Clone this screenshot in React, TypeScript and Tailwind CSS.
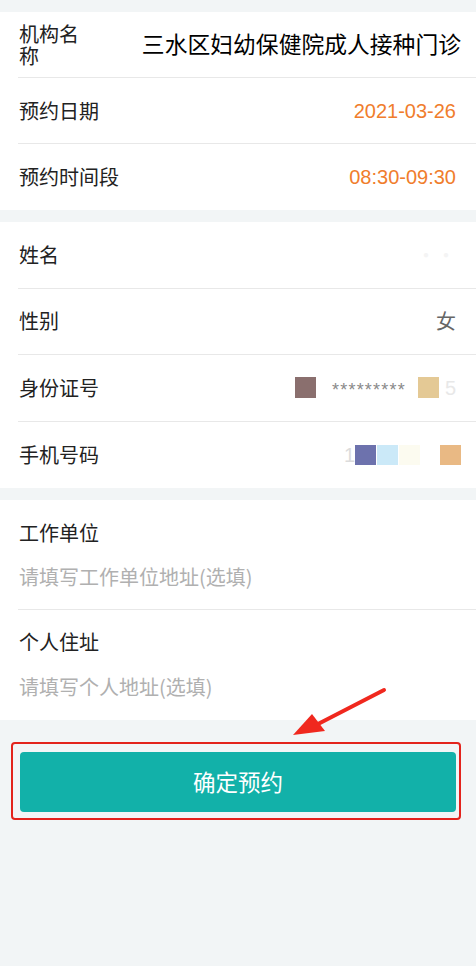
import React from 'react';

const font = { fontFamily: '"Noto Sans CJK SC", "Liberation Sans", sans-serif' };
const latin = { fontFamily: '"Liberation Sans", sans-serif' };

function Row({ label, children, last, tall }: { label: React.ReactNode; children?: React.ReactNode; last?: boolean; tall?: boolean }) {
  return (
    <div className={`flex ${tall ? 'h-[66.5px]' : 'h-[66px]'} items-center justify-between pl-px pr-5 ${last ? '' : 'border-b border-[#e8e8e8]'}`}>
      <div className="text-[20px] leading-[22px] text-[#222]">{label}</div>
      <div className="flex items-center">{children}</div>
    </div>
  );
}

function TextBlock({ label, placeholder, last }: { label: string; placeholder: string; last?: boolean }) {
  return (
    <div className={`pl-px ${last ? 'pt-[18px] pb-[19px]' : 'pt-[19px] pb-[18px] border-b border-[#e8e8e8]'}`}>
      <div className="text-[20px] leading-[28px] text-[#222]">{label}</div>
      <div className={`${last ? 'mt-[17px]' : 'mt-4'} text-[20px] leading-[28px] text-[#b0b0b0]`}>{placeholder}</div>
    </div>
  );
}

export default function App() {
  return (
    <div className="relative min-h-[966px] bg-[#f2f5f6] pt-3" style={font}>
      <div className="bg-white pl-[18px]">
        <Row label={<div className="w-[64px]">机构名称</div>}>
          <span className="-mr-[5px] text-[22.8px] text-black">三水区妇幼保健院成人接种门诊</span>
        </Row>
        <Row label="预约日期">
          <span className="text-[20px] text-[#f07d2c]" style={latin}>2021-03-26</span>
        </Row>
        <Row label="预约时间段" last>
          <span className="text-[20px] text-[#f07d2c]" style={latin}>08:30-09:30</span>
        </Row>
      </div>

      <div className="mt-3 bg-white pl-[18px]">
        <Row label="姓名" tall>
          <span className="text-[20px] text-[#f4f4f4]">··</span>
        </Row>
        <Row label="性别" tall>
          <span className="text-[20px] text-[#666]">女</span>
        </Row>
        <Row label="身份证号" tall>
          <div className="h-[21px] w-[21px] bg-[#8a6f6e]" />
          <span className="ml-4 mt-1 text-[18px] leading-none tracking-[1.2px] text-[#8a8a8a]" style={latin}>*********</span>
          <div className="ml-3 h-[21px] w-[21px] bg-[#e4c995]" />
          <span className="ml-1.5 text-[20px] text-[#e8e8e8]" style={latin}>5</span>
        </Row>
        <Row label="手机号码" last tall>
          <span className="text-[20px] text-[#dcdcdc]" style={latin}>1</span>
          <div className="h-[20px] w-[21px] bg-[#6d72ad]" />
          <div className="ml-px h-[20px] w-[21px] bg-[#cbe9f8]" />
          <div className="ml-px h-[20px] w-[21px] bg-[#fcfbf0]" />
          <div className="-mr-[5px] ml-[20px] h-[20px] w-[21px] bg-[#e9b984]" />
        </Row>
      </div>

      <div className="mt-3 bg-white pl-[18px]">
        <TextBlock label="工作单位" placeholder="请填写工作单位地址(选填)" />
        <TextBlock label="个人住址" placeholder="请填写个人地址(选填)" last />
      </div>

      <div className="ml-[11px] mr-[15px] mt-[22px] rounded-sm border-2 border-[#e3231c] pb-[6px] pl-[7px] pr-[3px] pt-2">
        <button className="flex h-[60px] w-full items-center justify-center rounded bg-[#12b1a9] text-[22.5px] text-white">
          确定预约
        </button>
      </div>

      <svg className="absolute left-[290px] top-[686px]" width="100" height="54" viewBox="0 0 100 54">
        <path d="M94 4 L28 38" stroke="#f0281e" strokeWidth="4" strokeLinecap="round" />
        <path d="M3 49 L22 28 L35 45 Z" fill="#f0281e" />
      </svg>
    </div>
  );
}
